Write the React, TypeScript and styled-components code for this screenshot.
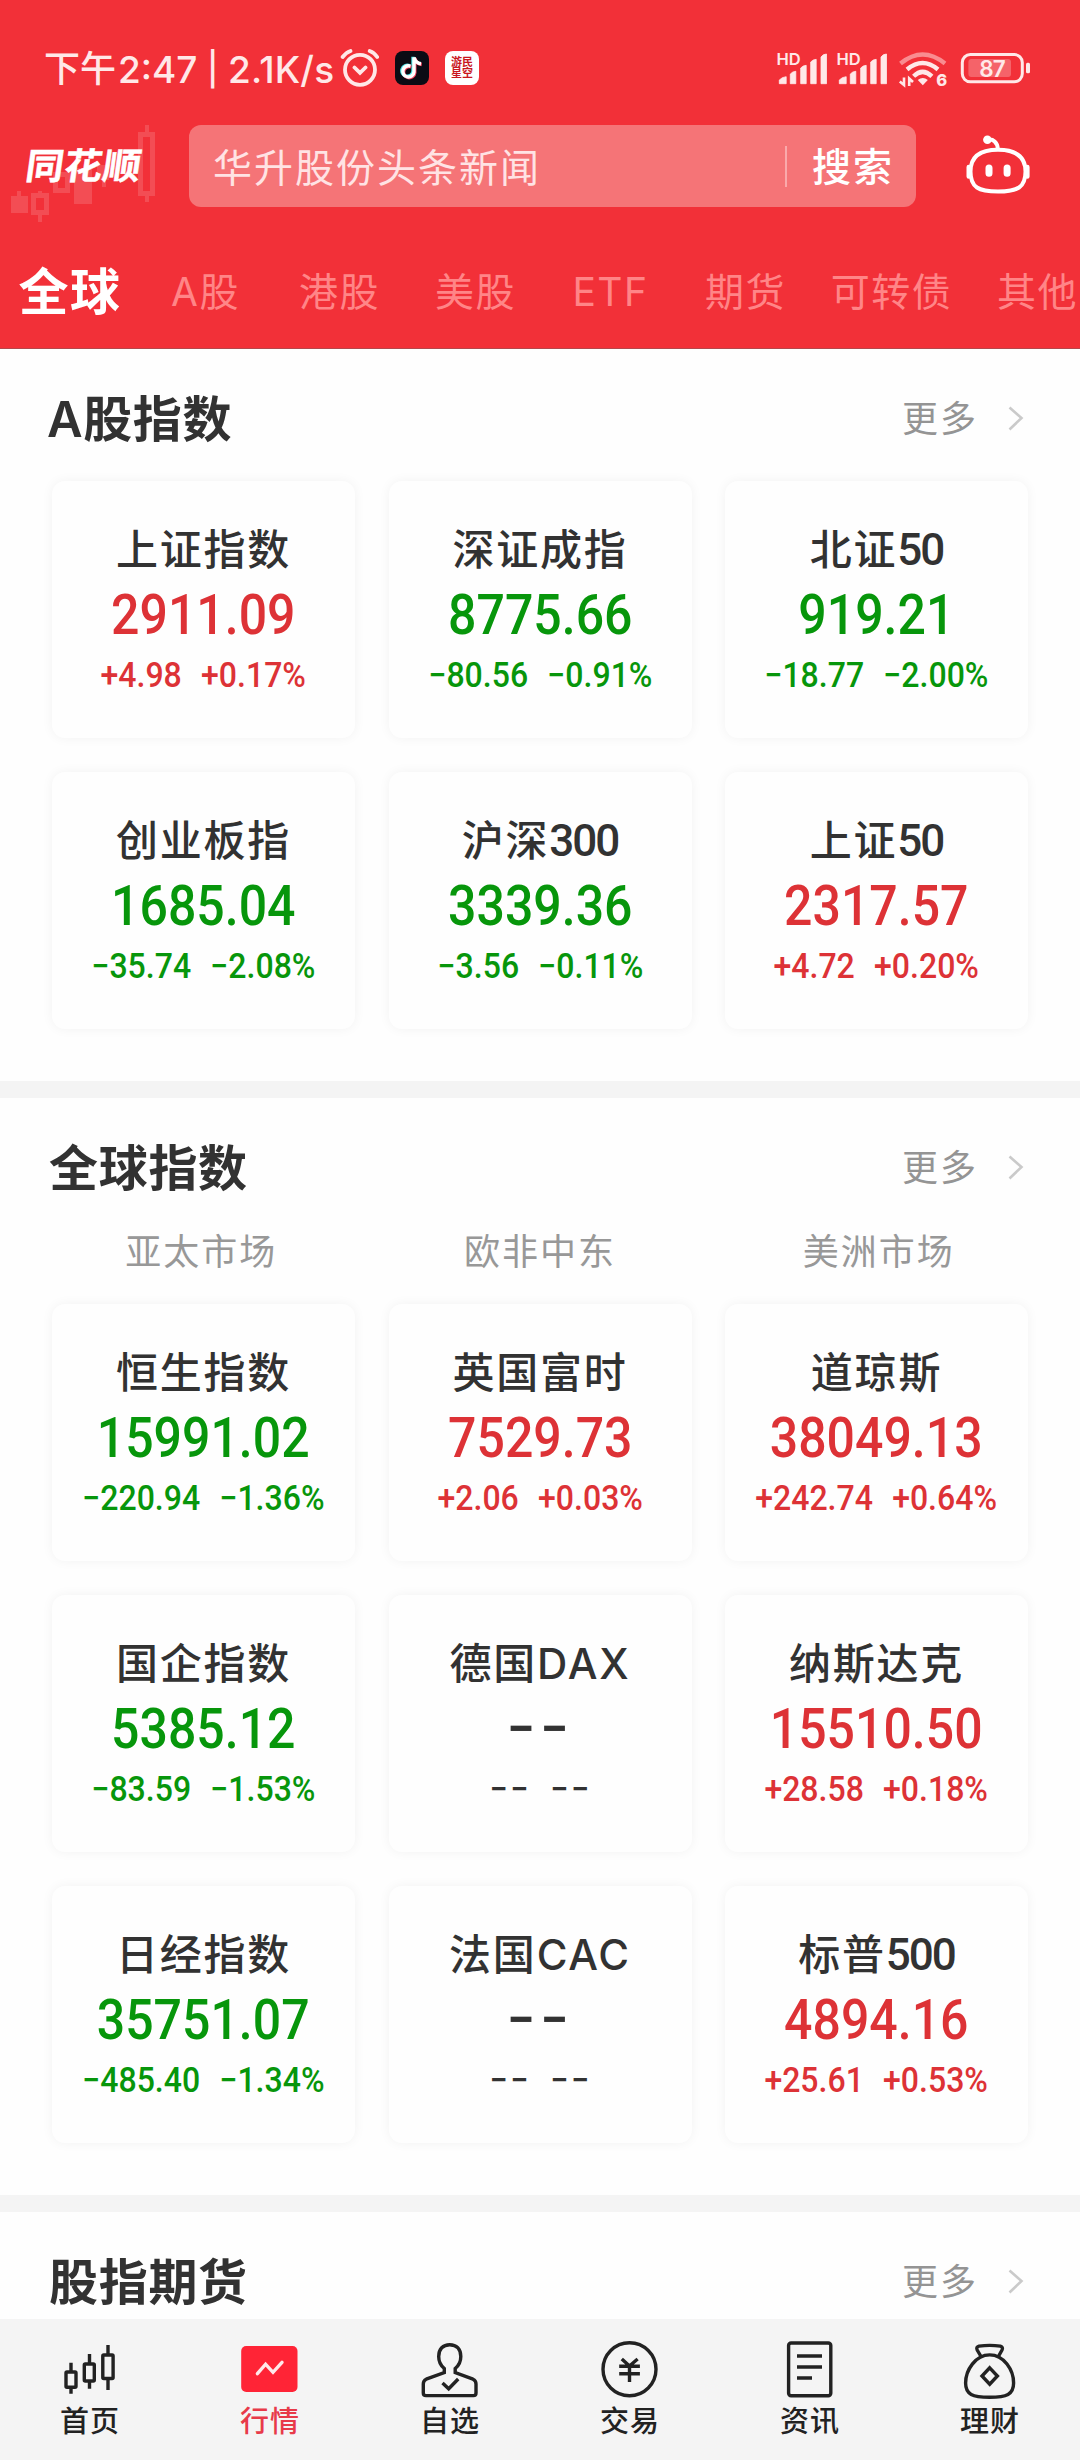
import React from 'react';
import styled, { createGlobalStyle } from 'styled-components';

const RED = '#dd3236';
const GREEN = '#07960b';
const DARK = '#323232';
const EMPTY = '−−';

const GlobalStyle = createGlobalStyle`
  * { box-sizing: border-box; }
  body {
    margin: 0;
    background: #fff;
    font-family: Inter, 'Noto Sans CJK SC', sans-serif;
    overflow: hidden;
  }
  svg { display: block; flex: none; }
`;

const Screen = styled.div`
  width: 1080px;
  height: 2460px;
  display: flex;
  flex-direction: column;
  overflow: hidden;
  background: #fefefe;
`;

const Header = styled.header`
  flex: none;
  height: 349px;
  background: #f23038;
  border-bottom: 1px solid #b4474c;
  display: flex;
  flex-direction: column;
`;

const StatusBar = styled.div`
  height: 125px;
  padding: 49px 47px 0 44px;
  display: flex;
  align-items: flex-start;
  color: #ffe8e8;
`;

const StatusText = styled.span<{ $w: number; $ls?: number; $size?: number }>`
  width: ${p => p.$w}px;
  line-height: 41px;
  font-size: ${p => p.$size ?? 36}px;
  font-weight: 500;
  letter-spacing: ${p => p.$ls ?? 0}px;
  white-space: nowrap;
`;

const StatusIcons = styled.div`
  margin-left: auto;
  display: flex;
`;

const AppTile = styled.div<{ $bg: string }>`
  width: 34px;
  height: 34px;
  margin: 2px 0 0 16px;
  border-radius: 8px;
  background: ${p => p.$bg};
  display: grid;
  place-content: center;
`;

const TileText = styled.span`
  font-size: 11px;
  line-height: 11px;
  width: 22px;
  font-weight: 700;
  color: #c9171e;
`;

const SearchRow = styled.div`
  height: 82px;
  display: flex;
`;

const Brand = styled.div`
  position: relative;
  width: 189px;
  padding: 18px 0 0 26px;
`;

const BrandCandles = styled.svg`
  position: absolute;
  left: 0;
  top: -5px;
`;

const BrandName = styled.span`
  position: relative;
  display: inline-block;
  font-size: 38px;
  line-height: 46px;
  letter-spacing: 0.5px;
  font-weight: 700;
  color: #fff;
  -webkit-text-stroke: 0.5px #fff;
  transform: skewX(-8deg) scaleY(0.95);
  white-space: nowrap;
`;

const SearchBox = styled.div`
  width: 727px;
  border-radius: 12px;
  background: #f57477;
  display: flex;
  align-items: center;
  padding: 0 24px;
`;

const Placeholder = styled.span`
  flex: 1;
  padding-top: 3px;
  font-size: 39px;
  line-height: 50px;
  letter-spacing: 2px;
  color: #ffe3e4;
`;

const SearchDivider = styled.i`
  width: 2.5px;
  height: 41px;
  background: #faa9ab;
`;

const SearchAction = styled.span`
  margin-left: 25px;
  padding-top: 2px;
  width: 80px;
  font-size: 39px;
  line-height: 50px;
  letter-spacing: 2px;
  font-weight: 500;
  color: #fff;
  white-space: nowrap;
`;

const Tabs = styled.nav`
  display: flex;
  margin-top: 28px;
  height: 113px;
  align-items: center;
  overflow: hidden;
`;

const Tab = styled.span<{ $active?: boolean; $w: number }>`
  flex: none;
  width: ${p => p.$w}px;
  text-align: center;
  white-space: nowrap;
  line-height: 60px;
  letter-spacing: 1.5px;
  font-size: ${p => (p.$active ? 50 : 39)}px;
  font-weight: ${p => (p.$active ? 700 : 400)};
  color: ${p => (p.$active ? '#fff' : '#ff8587')};
`;

const Content = styled.main`
  flex: 1;
  min-height: 0;
  overflow: hidden;
`;

const Section = styled.section`
  padding: 40px 52px 52px;
  background: #fefefe;
`;

const Divider = styled.div`
  height: 17px;
  background: #f4f4f4;
`;

const SectionHead = styled.div`
  height: 60px;
  display: flex;
  align-items: center;
  justify-content: space-between;
`;

const Title = styled.h2`
  margin: 2px 0 0 -3px;
  font-size: 49px;
  line-height: 60px;
  letter-spacing: 0.7px;
  font-weight: 700;
  color: ${DARK};
`;

const TitleLatin = styled.span`
  margin-left: -2px;
  letter-spacing: 0.5px;
  font-weight: 600;
`;

const More = styled.span`
  display: flex;
  align-items: center;
  font-size: 36px;
  line-height: 50px;
  letter-spacing: 2px;
  color: #949494;
  svg { margin-left: 29px; margin-right: 4px; }
`;

const Markets = styled.div`
  display: grid;
  grid-template-columns: repeat(3, 1fr);
  margin: 29px -20px -5px;
  span {
    text-align: center;
    font-size: 36px;
    line-height: 50px;
    letter-spacing: 2px;
    color: #989898;
  }
`;

const Cards = styled.div`
  margin-top: 32px;
  display: grid;
  grid-template-columns: repeat(3, 303px);
  justify-content: space-between;
  row-gap: 34px;
`;

const Card = styled.article`
  height: 257px;
  padding-top: 44px;
  border-radius: 13px;
  background: #fefefe;
  box-shadow: 0 0 12px rgba(0, 0, 0, 0.05);
  display: flex;
  flex-direction: column;
  align-items: center;
  white-space: nowrap;
`;

const Name = styled.span`
  font-size: 42px;
  line-height: 50px;
  letter-spacing: 1.8px;
  font-weight: 500;
  color: ${DARK};
`;

const NameDigits = styled.span`
  font-family: Roboto, sans-serif;
  font-size: 44px;
  font-weight: 500;
  letter-spacing: -2px;
`;

const Value = styled.span<{ $c: string; $empty: boolean }>`
  margin-top: 10px;
  font-family: Roboto, sans-serif;
  font-size: 56px;
  line-height: 60px;
  font-weight: 500;
  letter-spacing: ${p => (p.$empty ? 6 : 0)}px;
  color: ${p => p.$c};
  transform: scaleX(0.893);
`;

const Change = styled.span<{ $c: string; $empty: boolean }>`
  margin-top: 11px;
  margin-left: ${p => (p.$empty ? 2 : 0)}px;
  display: flex;
  gap: 21px;
  font-family: Roboto, sans-serif;
  font-size: 35px;
  line-height: 40px;
  font-weight: 500;
  letter-spacing: ${p => (p.$empty ? 3 : 0)}px;
  color: ${p => p.$c};
  transform: scaleX(0.915);
`;

const NavBar = styled.nav`
  flex: none;
  height: 141px;
  background: #f4f4f4;
  display: grid;
  grid-template-columns: repeat(6, 1fr);
`;

const NavItem = styled.div<{ $active?: boolean }>`
  padding-top: 20px;
  display: flex;
  flex-direction: column;
  align-items: center;
  font-size: 29px;
  line-height: 40px;
  letter-spacing: 1px;
  font-weight: 500;
  color: ${p => (p.$active ? '#e83a49' : '#222')};
  svg { margin-bottom: 3px; }
`;

type Quote = { name: string; value: string; a: string; b: string };

const q = (name: string, value: string, a: string, b: string): Quote => ({ name, value, a, b });

const A_SHARES: Quote[] = [
  q('上证指数', '2911.09', '+4.98', '+0.17%'),
  q('深证成指', '8775.66', '−80.56', '−0.91%'),
  q('北证50', '919.21', '−18.77', '−2.00%'),
  q('创业板指', '1685.04', '−35.74', '−2.08%'),
  q('沪深300', '3339.36', '−3.56', '−0.11%'),
  q('上证50', '2317.57', '+4.72', '+0.20%'),
];

const GLOBAL: Quote[] = [
  q('恒生指数', '15991.02', '−220.94', '−1.36%'),
  q('英国富时', '7529.73', '+2.06', '+0.03%'),
  q('道琼斯', '38049.13', '+242.74', '+0.64%'),
  q('国企指数', '5385.12', '−83.59', '−1.53%'),
  q('德国DAX', EMPTY, EMPTY, EMPTY),
  q('纳斯达克', '15510.50', '+28.58', '+0.18%'),
  q('日经指数', '35751.07', '−485.40', '−1.34%'),
  q('法国CAC', EMPTY, EMPTY, EMPTY),
  q('标普500', '4894.16', '+25.61', '+0.53%'),
];

function QuoteCard({ quote }: { quote: Quote }) {
  const m = quote.name.match(/^(\D+)(\d*)$/)!;
  const empty = quote.value === EMPTY;
  const color = empty ? DARK : quote.a.startsWith('+') ? RED : GREEN;
  return (
    <Card>
      <Name>
        {m[1]}
        {m[2] && <NameDigits>{m[2]}</NameDigits>}
      </Name>
      <Value $c={color} $empty={empty}>{quote.value}</Value>
      <Change $c={color} $empty={empty}>
        <span>{quote.a}</span>
        <span>{quote.b}</span>
      </Change>
    </Card>
  );
}

function Head({ latin, title }: { latin?: string; title: string }) {
  return (
    <SectionHead>
      <Title>
        {latin && <TitleLatin>{latin}</TitleLatin>}
        {title}
      </Title>
      <More>
        更多
        <svg width="17" height="28" viewBox="0 0 17 28" fill="none" stroke="#cacaca" strokeWidth="2.6">
          <path d="M2.5 2.5 L14.5 13 L2.5 24.5" />
        </svg>
      </More>
    </SectionHead>
  );
}

const Signal = () => (
  <svg width="60" height="40" viewBox="0 0 60 40" fill="#ffe8e8">
    <text x="1.5" y="15.5" fontSize="16.5" fontWeight="600" fontFamily="Inter">HD</text>
    <path d="M4.3 34.7V31Q7 28 11.2 27.7V34.7ZM15.3 34.7V25Q17.5 22.5 20.8 22.3V34.7ZM25.7 34.7V19Q28 16.5 31.2 16.3V34.7ZM35.7 34.7V13Q38 10.5 41.2 10.3V34.7ZM46 34.7V8Q48 5 51.5 5V34.7Z" stroke="#ffe8e8" strokeWidth="0.8" strokeLinejoin="round" />
  </svg>
);

const ICON = { width: 60, height: 60, viewBox: '0 0 60 60', fill: 'none', stroke: '#222', strokeWidth: 3.4 } as const;

const NAV = [
  {
    label: '首页',
    icon: (
      <svg {...ICON}>
        <rect x="6" y="33" width="10" height="15.2" rx="1" />
        <rect x="24.3" y="25" width="10" height="17" rx="1" />
        <rect x="42.8" y="16" width="10.3" height="23.5" rx="1" />
        <path d="M11 23.7V33M11 48V54.7M29.5 15V25M29.5 42V49.7M48 6V16M48 39.5V51" />
      </svg>
    ),
  },
  {
    label: '行情',
    active: true,
    icon: (
      <svg {...ICON}>
        <rect x="1.2" y="7" width="56.3" height="46" rx="5" fill="#ff2436" stroke="none" />
        <path d="M17.4 34.6L25.6 25.2L33 33.3L42 23.3" stroke="#ffe9ea" strokeLinecap="round" />
      </svg>
    ),
  },
  {
    label: '自选',
    icon: (
      <svg {...ICON}>
        <path d="M24.3 29.5C20.6 26.5 18.7 23.5 18.7 17.5C18.7 10 23 5.7 29.7 5.7C36.4 5.7 40.8 10 40.8 17.5C40.8 23.5 38.9 26.5 35.2 29.5V33.6L53 40.2Q56 41.5 56 45V54Q56 56.6 53.4 56.6H6Q3.3 56.6 3.3 54V45Q3.3 41.5 6.2 40.2L24.3 33.6Z" />
        <path d="M22.5 44L28.7 49.8L38.2 40" />
      </svg>
    ),
  },
  {
    label: '交易',
    icon: (
      <svg {...ICON}>
        <circle cx="29.5" cy="30.3" r="26.5" />
        <path d="M21.8 20L29.5 27L37.6 20M19.2 27.3H39.9M19.2 34.8H39.9M29.5 27V43" />
      </svg>
    ),
  },
  {
    label: '资讯',
    icon: (
      <svg {...ICON}>
        <rect x="8.6" y="4" width="42.2" height="52.7" rx="2.5" />
        <path d="M17 17H42M17 28H42M17 39H32" />
      </svg>
    ),
  },
  {
    label: '理财',
    icon: (
      <svg {...ICON}>
        <path d="M29.7 15.9C15.5 15.9 5.6 31 5.6 44C5.6 55.5 12.5 58.2 29.6 58.2C46.7 58.2 53.6 55.5 53.6 44C53.6 31 43.9 15.9 29.7 15.9Z" />
        <path d="M21 17.5L17.2 11Q15.8 8 19 7.1Q29.7 5.7 40.4 7.1Q43.4 8 42 11L38.4 17.5" />
        <path d="M29.7 28.8L37.4 37L29.7 45.2L22 37Z" />
      </svg>
    ),
  },
];

export default function App() {
  return (
    <Screen>
      <GlobalStyle />
      <Header>
        <StatusBar>
          <StatusText $w={74}>下午</StatusText>
          <StatusText $w={89} $size={37}>2:47</StatusText>
          <StatusText $w={21} $size={33}>|</StatusText>
          <StatusText $w={108} $size={37} $ls={0.2}>2.1K/s</StatusText>
          <svg width="43" height="40" viewBox="336 49 43 40" fill="none" stroke="#ffe8e8" strokeWidth="3.8" strokeLinecap="round">
            <circle cx="360" cy="69.8" r="15" />
            <path d="M354.5 67.5L360 72.8L365.5 67.5M342.6 57Q346 52.5 350.5 51M377.2 57Q374.2 52.5 369.7 51" />
          </svg>
          <AppTile $bg="#0b0b14">
            <svg width="24" height="26" viewBox="0 0 24 26" fill="none" strokeWidth="3.4">
              <path d="M10.5 11.2A5.6 5.6 0 1 0 14 17V2.5" stroke="#4fe3e6" transform="translate(-1 -.7)" />
              <path d="M10.5 11.2A5.6 5.6 0 1 0 14 17V2.5Q15.5 8 21 8.7" stroke="#f5425f" transform="translate(.8 .8)" />
              <path d="M10.5 11.2A5.6 5.6 0 1 0 14 17V2.5Q15.5 8 21 8.7" stroke="#fff" />
            </svg>
          </AppTile>
          <AppTile $bg="#fff">
            <TileText>游民星空</TileText>
          </AppTile>
          <StatusIcons>
            <Signal />
            <Signal />
            <svg width="64" height="40" viewBox="0 0 64 40" fill="none" stroke="#ffe8e8" strokeWidth="4.4">
              <path d="M5.5 14.5Q27.6 -3.5 50 14.5" strokeOpacity="0.5" />
              <path d="M12 20.5Q27.6 7.5 43 20.5" />
              <path d="M18.6 27.3Q27.6 18.5 36.9 27.3" />
              <path d="M22.8 31Q27.8 27 32.8 31L27.8 36.2Z" fill="#ffe8e8" stroke="none" />
              <path d="M9 28.5V36L4.8 32.5M14.2 37V29.5L18 33" strokeWidth="2.6" />
              <text x="41.2" y="37.3" fontSize="16.5" fontWeight="800" fontFamily="Inter" fill="#ffe8e8" stroke="none">6</text>
            </svg>
            <svg width="74" height="40" viewBox="0 0 74 40" fill="#ffe8e8">
              <rect x="3.3" y="5.5" width="60" height="27.3" rx="8" fill="none" stroke="#ffe8e8" strokeWidth="3" />
              <rect x="9.4" y="10" width="42.6" height="18" rx="3" fillOpacity="0.28" />
              <rect x="67" y="13.7" width="4" height="10.6" rx="1.5" />
              <text x="33" y="28" fontSize="22.5" fontWeight="600" fontFamily="Inter" textAnchor="middle" letterSpacing="-1">87</text>
            </svg>
          </StatusIcons>
        </StatusBar>
        <SearchRow>
          <Brand>
            <BrandCandles width="170" height="110" viewBox="0 120 170 110" fill="#fff" fillOpacity="0.14">
              <path d="M11 196H17V191H21V196H28V213H11Z" />
              <path fillRule="evenodd" d="M31 193H38V191H42V193H49V215H42V222H38V215H31ZM36 198V210H44V198Z" />
              <path fillRule="evenodd" d="M53 172H70V193H53ZM58 177V188H65V177Z" />
              <path d="M74 168H92V204H74ZM97 165H109V180H106V187H102V180H97Z" />
              <path fillRule="evenodd" d="M138 132H145V125H149V132H155V196H149V202H145V196H138ZM143 137V191H150V137Z" />
            </BrandCandles>
            <BrandName>同花顺</BrandName>
          </Brand>
          <SearchBox>
            <Placeholder>华升股份头条新闻</Placeholder>
            <SearchDivider />
            <SearchAction>搜索</SearchAction>
          </SearchBox>
          <svg width="120" height="82" viewBox="-44 -5 120 82" fill="none" stroke="#fff" strokeWidth="4">
            <path d="M38 19.8C58 19.8 65.5 28.5 65.5 41.5C65.5 57.5 57.5 61.5 38 61.5C18.5 61.5 10.5 57.5 10.5 41.5C10.5 28.5 18 19.8 38 19.8Z" />
            <path d="M27.5 9.8C33 8.5 37.6 12.5 37.8 19" />
            <circle cx="27.4" cy="9.8" r="4.3" fill="#fff" stroke="none" />
            <path d="M29 38V43.3M47.1 38V43.3" strokeWidth="7" strokeLinecap="round" />
            <path d="M8.8 37V46.5M67.3 37V46.5" strokeWidth="4.6" strokeLinecap="round" />
          </svg>
        </SearchRow>
        <Tabs>
          <Tab $w={140} $active>全球</Tab>
          <Tab $w={131}>A股</Tab>
          <Tab $w={137}>港股</Tab>
          <Tab $w={135}>美股</Tab>
          <Tab $w={135}>ETF</Tab>
          <Tab $w={135}>期货</Tab>
          <Tab $w={157}>可转债</Tab>
          <Tab $w={135}>其他</Tab>
        </Tabs>
      </Header>
      <Content>
        <Section>
          <Head latin="A" title="股指数" />
          <Cards>
            {A_SHARES.map(x => <QuoteCard key={x.name} quote={x} />)}
          </Cards>
        </Section>
        <Divider />
        <Section>
          <Head title="全球指数" />
          <Markets>
            <span>亚太市场</span>
            <span>欧非中东</span>
            <span>美洲市场</span>
          </Markets>
          <Cards>
            {GLOBAL.map(x => <QuoteCard key={x.name} quote={x} />)}
          </Cards>
        </Section>
        <Divider />
        <Section>
          <Head title="股指期货" />
        </Section>
      </Content>
      <NavBar>
        {NAV.map(n => (
          <NavItem key={n.label} $active={n.active}>
            {n.icon}
            {n.label}
          </NavItem>
        ))}
      </NavBar>
    </Screen>
  );
}
